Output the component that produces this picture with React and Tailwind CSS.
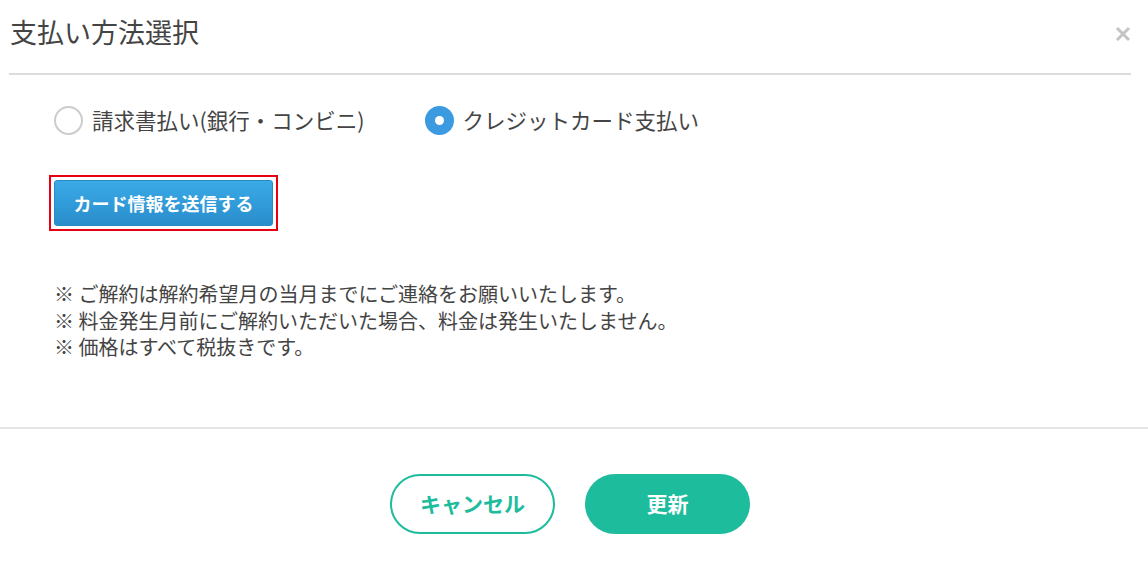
import React, { useState } from 'react';

const font = { fontFamily: '"Noto Sans CJK JP", "Noto Sans", sans-serif' };

const Radio = ({ checked, label, onClick }) => (
  <label className="flex items-center gap-[9px] cursor-pointer" onClick={onClick}>
    {checked ? (
      <span className="w-[29px] h-[29px] rounded-full bg-[#3b9ae0] flex items-center justify-center">
        <span className="w-[9px] h-[9px] rounded-full bg-white" />
      </span>
    ) : (
      <span className="w-[29px] h-[29px] rounded-full border-2 border-[#cccccc] bg-white" />
    )}
    <span className="text-[21.5px] leading-[30px] text-[#444]">{label}</span>
  </label>
);

const App = () => {
  const [method, setMethod] = useState('card');

  return (
    <div className="w-[1148px] h-[576px] bg-white" style={font}>
      <div className="ml-[9px] mr-[17px] h-[75px] border-b-2 border-[#dcdcdc] flex items-start justify-between">
        <h1 className="pt-[13px] pl-[1px] text-[27px] leading-[38px] text-[#444]">支払い方法選択</h1>
        <button className="mt-[26px] w-[16px] h-[16px]">
          <svg viewBox="0 0 16 16" width="16" height="16">
            <path d="M2 2 L14 14 M14 2 L2 14" stroke="#c4c4c4" strokeWidth="3" />
          </svg>
        </button>
      </div>

      <div className="h-[352px] pl-[54px] pt-[30px]">
        <div className="flex items-center gap-[60px] h-[30px]">
          <Radio checked={method === 'bank'} label="請求書払い(銀行・コンビニ)" onClick={() => setMethod('bank')} />
          <Radio checked={method === 'card'} label="クレジットカード支払い" onClick={() => setMethod('card')} />
        </div>

        <div className="mt-[40px] -ml-[5px] inline-block border-2 border-[#e60012] p-[3px]">
          <button className="w-[219px] h-[46px] rounded-[3px] bg-gradient-to-b from-[#3aaae7] to-[#2a8dcc] text-white font-bold text-[18px] border border-[#2a88c4]">
            カード情報を送信する
          </button>
        </div>

        <div className="mt-[50px] text-[20px] leading-[26.5px] text-[#444]">
          <p>※ ご解約は解約希望月の当月までにご連絡をお願いいたします。</p>
          <p>※ 料金発生月前にご解約いただいた場合、料金は発生いたしません。</p>
          <p>※ 価格はすべて税抜きです。</p>
        </div>
      </div>

      <div className="border-t-2 border-[#e5e5e5] pt-[45px] flex justify-center gap-[30px] pr-[8px]">
        <button className="w-[165px] h-[60px] rounded-full border-2 border-[#1dbc9c] text-[#1dbc9c] font-bold text-[21px] bg-white">
          キャンセル
        </button>
        <button className="w-[165px] h-[60px] rounded-full bg-[#1dbc9c] text-white font-bold text-[21px]">
          更新
        </button>
      </div>
    </div>
  );
};

export default App;
